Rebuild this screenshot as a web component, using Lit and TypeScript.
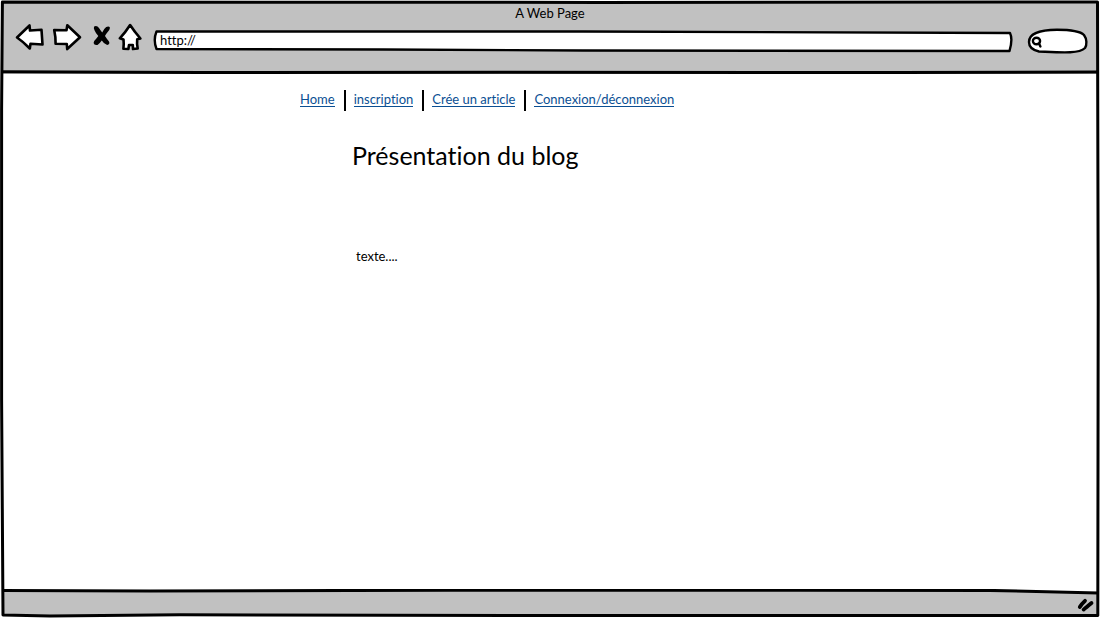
import { LitElement, html, css, svg } from "lit";
import { customElement } from "lit/decorators.js";

const ink = "#000";

@customElement("browser-toolbar")
class BrowserToolbar extends LitElement {
  static styles = css`
    :host { display: block; background: #c1c1c1; padding-top: 4px; }
    .title { height: 19px; line-height: 19px; text-align: center; font-size: 13px; }
    .bar { display: flex; align-items: flex-start; height: 30px; padding: 0 12px 0 15px; }
    button { border: 0; padding: 0; background: none; display: block; height: 28px; flex: none; }
    svg { display: block; overflow: visible; }
    .back { width: 30px; margin-right: 7px; }
    .forward { width: 30px; margin-right: 10px; }
    .stop { width: 20px; margin-right: 6px; }
    .home { width: 24px; margin-right: 11px; }
    .field { display: grid; }
    .field > * { grid-area: 1 / 1; min-width: 0; }
    .url { flex: 1; height: 22px; margin: 7px 14px 0 0; }
    .search { width: 61px; height: 26px; margin-top: 5px; }
    .shape { width: 100%; height: 100%; }
    input {
      border: 0; background: none; outline: 0; font: inherit; font-size: 13px;
      color: #000; width: 100%; height: 20px; box-sizing: border-box; padding: 0 7px;
    }
    .search input { padding: 0 8px 0 18px; }
    .glass { width: 12px; height: 12px; margin: 8px 0 0 4px; }
    .rule { width: 100%; height: 4px; margin-top: 17px; }
  `;

  render() {
    return html`
      <div class="title">A Web Page</div>
      <div class="bar">
        <button class="back" aria-label="Back">
          <svg width="30" height="28" viewBox="0 0 30 28" fill="#fff" stroke=${ink} stroke-width="2.6" stroke-linejoin="round">
            <path d="M2 14.5 L14.5 2.5 L15 7.5 L26.5 6.8 L27.5 21.5 L15.5 20.8 L14.8 25.5 Q8 18.5 2 14.5Z" />
          </svg>
        </button>
        <button class="forward" aria-label="Forward">
          <svg width="30" height="28" viewBox="0 0 30 28" fill="#fff" stroke=${ink} stroke-width="2.6" stroke-linejoin="round">
            <path d="M2.2 7 L14.5 7.2 L15.3 2.2 L28 14.3 L15.2 26 L14.8 21 L3.6 20.8 Q3.8 14 2.2 7Z" />
          </svg>
        </button>
        <button class="stop" aria-label="Stop">
          <svg width="20" height="28" viewBox="0 0 20 28" fill=${ink}>
            <path d="M2.1 3.4 Q5 2 7 5 Q8.6 7.6 10.2 9.4 Q11.5 6.2 14.2 4 Q17 2.6 18 4.8 Q17.8 7 15.5 9.3 Q13.6 11.5 13 13 Q14.5 15.5 17 18.4 Q18.3 21.2 15.2 22 Q12 21 9.8 17.4 Q8 20 5.5 21.9 Q2.2 22.7 1.6 20 Q1.8 17.8 4.4 15.5 L6.3 13 Q3.6 10 2.5 7.3 Q1.4 5 2.1 3.4Z" />
          </svg>
        </button>
        <button class="home" aria-label="Home">
          <svg width="24" height="28" viewBox="0 0 24 28" fill="#fff" stroke=${ink} stroke-width="2.6" stroke-linejoin="round">
            <path d="M12.1 2 Q16 8 22.4 15.5 L19.2 16.3 Q18.7 21 19.7 25.5 L15 26 L14.8 22 L11 22 L10.4 26 L5.4 25.8 Q6 21 5.5 16.4 L1.8 15.3 Q7 10 12.1 2Z" />
          </svg>
        </button>
        <div class="field url">
          <svg class="shape" viewBox="0 0 860 22" preserveAspectRatio="none" fill="#fff" stroke=${ink} stroke-width="2.4" stroke-linejoin="round">
            <path vector-effect="non-scaling-stroke" d="M3.5 1.5 L430 1.5 Q650 3 857 3 Q860 9 856.5 21 L430 20.5 L230 19.5 L3.5 19 Q0 10 3.5 1.5Z" />
          </svg>
          <input aria-label="Address" value="http://" />
        </div>
        <div class="field search">
          <svg class="shape" viewBox="0 0 61 26" preserveAspectRatio="none" fill="#fff" stroke=${ink} stroke-width="2.4">
            <path d="M2 14 C2 6 10 2 30 1.8 C48 1.8 54 4 57 7 C60 11 60 17 58 20 C52 26 34 24.5 12 23.5 C5 22 2 18 2 14Z" />
          </svg>
          <svg class="glass" viewBox="0 0 12 12" fill="none" stroke=${ink} stroke-width="2.4" stroke-linecap="round">
            <ellipse cx="5.5" cy="5" rx="3.6" ry="3.3" /><path d="M8 7.5 L9.4 10.5" />
          </svg>
          <input aria-label="Search" />
        </div>
      </div>
      <svg class="rule" viewBox="0 0 1100 4" preserveAspectRatio="none" fill="none" stroke=${ink} stroke-width="3">
        <path vector-effect="non-scaling-stroke" d="M2 1.8 L200 2.6 L500 2.2 L900 2.6 L1098 2" />
      </svg>
    `;
  }
}

@customElement("app-root")
class AppRoot extends LitElement {
  static styles = css`
    :host {
      display: flex; flex-direction: column; position: relative; min-height: 100vh;
      background: #fff; color: #000; font-family: Lato, sans-serif; font-size: 13px;
      font-variant-ligatures: none;
    }
    .outline { position: absolute; inset: 0; width: 100%; height: 100%; pointer-events: none; }
    main { flex: 1; padding: 16px 20px 20px 300px; }
    nav { display: flex; height: 21px; align-items: flex-start; white-space: nowrap; }
    a {
      color: #0b4f93; text-decoration: none; border-bottom: 1px solid #0b4f93;
      line-height: 13px; margin: 3px 9px 0 0;
    }
    .sep { width: 2px; height: 21px; background: #000; margin-right: 8px; }
    h1 { margin: 30px 0 0 52px; font-size: 25px; line-height: 28px; font-weight: 400; }
    p { margin: 78px 0 0 56px; line-height: 18px; }
    footer { height: 29px; background: #c1c1c1; }
    .edge { display: block; width: 100%; height: 6px; }
    .grip { display: block; width: 18px; height: 16px; margin: 2px 5px 0 auto; }
  `;

  links = ["Home", "inscription", "Crée un article", "Connexion/déconnexion"];

  render() {
    return html`
      <browser-toolbar></browser-toolbar>
      <main>
        <nav>
          ${this.links.map((t, i) => html`${i ? html`<span class="sep"></span>` : ""}<a href="#">${t}</a>`)}
        </nav>
        <h1>Présentation du blog</h1>
        <p>texte....</p>
      </main>
      <footer>
        <svg class="edge" viewBox="0 0 1100 6" preserveAspectRatio="none">
          <path d="M0 0 H1100 V4 L990 1.5 H0Z" fill="#fff" />
          <path vector-effect="non-scaling-stroke" d="M2 1.5 L150 2 L450 1.2 L800 1.2 L990 1.4 L1098 4" fill="none" stroke=${ink} stroke-width="3" />
        </svg>
        <svg class="grip" viewBox="0 0 18 16" stroke=${ink} stroke-linecap="round" fill="none">
          <path d="M2.8 10 Q4.5 7 8 3.8" stroke-width="3.8" />
          <path d="M6.6 12.6 Q9 10.5 14.5 6" stroke-width="3.8" />
        </svg>
      </footer>
      <svg class="outline" viewBox="0 0 1100 618" preserveAspectRatio="none">
        ${svg`<path d="M0 0 H1100 V618 H0Z M2 2.5 V615 H1098 V2.5Z" fill="#fff" fill-rule="evenodd" />
        <path vector-effect="non-scaling-stroke" fill="none" stroke=${ink} stroke-width="3" stroke-linejoin="round"
          d="M2.4 2 L600 2.4 L1097.5 2 L1098.2 300 L1097.8 615.5 L600 615.6 L180 614.8 L50 616 L3 615 L1.6 400 L1.6 110Z" />`}
      </svg>
    `;
  }
}
